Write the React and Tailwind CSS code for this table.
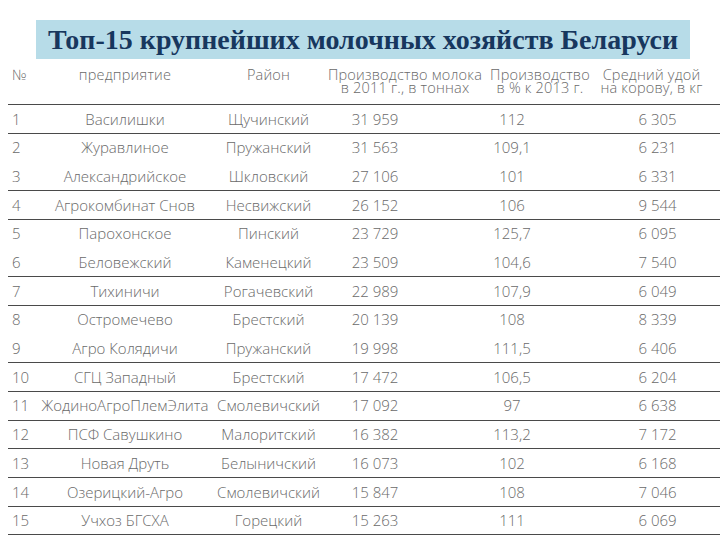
import React from "react";

const rows = [
  ["1", "Василишки", "Щучинский", "31 959", "112", "6 305", true],
  ["2", "Журавлиное", "Пружанский", "31 563", "109,1", "6 231", false],
  ["3", "Александрийское", "Шкловский", "27 106", "101", "6 331", true],
  ["4", "Агрокомбинат Снов", "Несвижский", "26 152", "106", "9 544", true],
  ["5", "Парохонское", "Пинский", "23 729", "125,7", "6 095", false],
  ["6", "Беловежский", "Каменецкий", "23 509", "104,6", "7 540", true],
  ["7", "Тихиничи", "Рогачевский", "22 989", "107,9", "6 049", true],
  ["8", "Остромечево", "Брестский", "20 139", "108", "8 339", false],
  ["9", "Агро Колядичи", "Пружанский", "19 998", "111,5", "6 406", true],
  ["10", "СГЦ Западный", "Брестский", "17 472", "106,5", "6 204", true],
  ["11", "ЖодиноАгроПлемЭлита", "Смолевичский", "17 092", "97", "6 638", true],
  ["12", "ПСФ Савушкино", "Малоритский", "16 382", "113,2", "7 172", true],
  ["13", "Новая Друть", "Белыничский", "16 073", "102", "6 168", true],
  ["14", "Озерицкий-Агро", "Смолевичский", "15 847", "108", "7 046", true],
  ["15", "Учхоз БГСХА", "Горецкий", "15 263", "111", "6 069", true],
];

const cols = "grid grid-cols-[30px_174px_113px_160px_110px_113px]";

export default function App() {
  return (
    <div className="w-[720px] h-[540px] bg-white overflow-hidden" style={{ fontFamily: "'Open Sans', sans-serif" }}>
      <div className="pt-[20px] pl-[36px]">
        <div className="w-[654px] h-[39px] bg-[#b7dce8] flex items-center justify-center">
          <h1 className="text-[28px] font-bold text-[#17375e] leading-none" style={{ fontFamily: "'Liberation Serif', serif" }}>
            Топ-15 крупнейших молочных хозяйств Беларуси
          </h1>
        </div>
      </div>
      <div className="pl-[8px] text-[#6a6a6a] font-light">
        <div className={cols + " h-[46px] border-b border-[#4a4a4a] text-[14.5px] leading-[13px] pt-[9px] tracking-[0.2px]"}>
          <div className="pl-[4px]">№</div>
          <div className="text-center">предприятие</div>
          <div className="text-center">Район</div>
          <div className="text-center whitespace-nowrap">Производство молока<br />в 2011 г., в тоннах</div>
          <div className="text-center whitespace-nowrap">Производство<br />в % к 2013 г.</div>
          <div className="text-center whitespace-nowrap">Средний удой<br />на корову, в кг</div>
        </div>
        {rows.map((r) => (
          <div key={r[0]} className={cols + " h-[28.7px] items-center text-[15px] " + (r[6] ? "border-b border-[#4a4a4a]" : "border-b border-transparent")}>
            <div className="pl-[4px]">{r[0]}</div>
            <div className="text-center whitespace-nowrap">{r[1]}</div>
            <div className="text-center whitespace-nowrap">{r[2]}</div>
            <div className="text-center pr-[60px]">{r[3]}</div>
            <div className="text-center pr-[56px]">{r[4]}</div>
            <div className="text-center pl-[12px]">{r[5]}</div>
          </div>
        ))}
      </div>
    </div>
  );
}
